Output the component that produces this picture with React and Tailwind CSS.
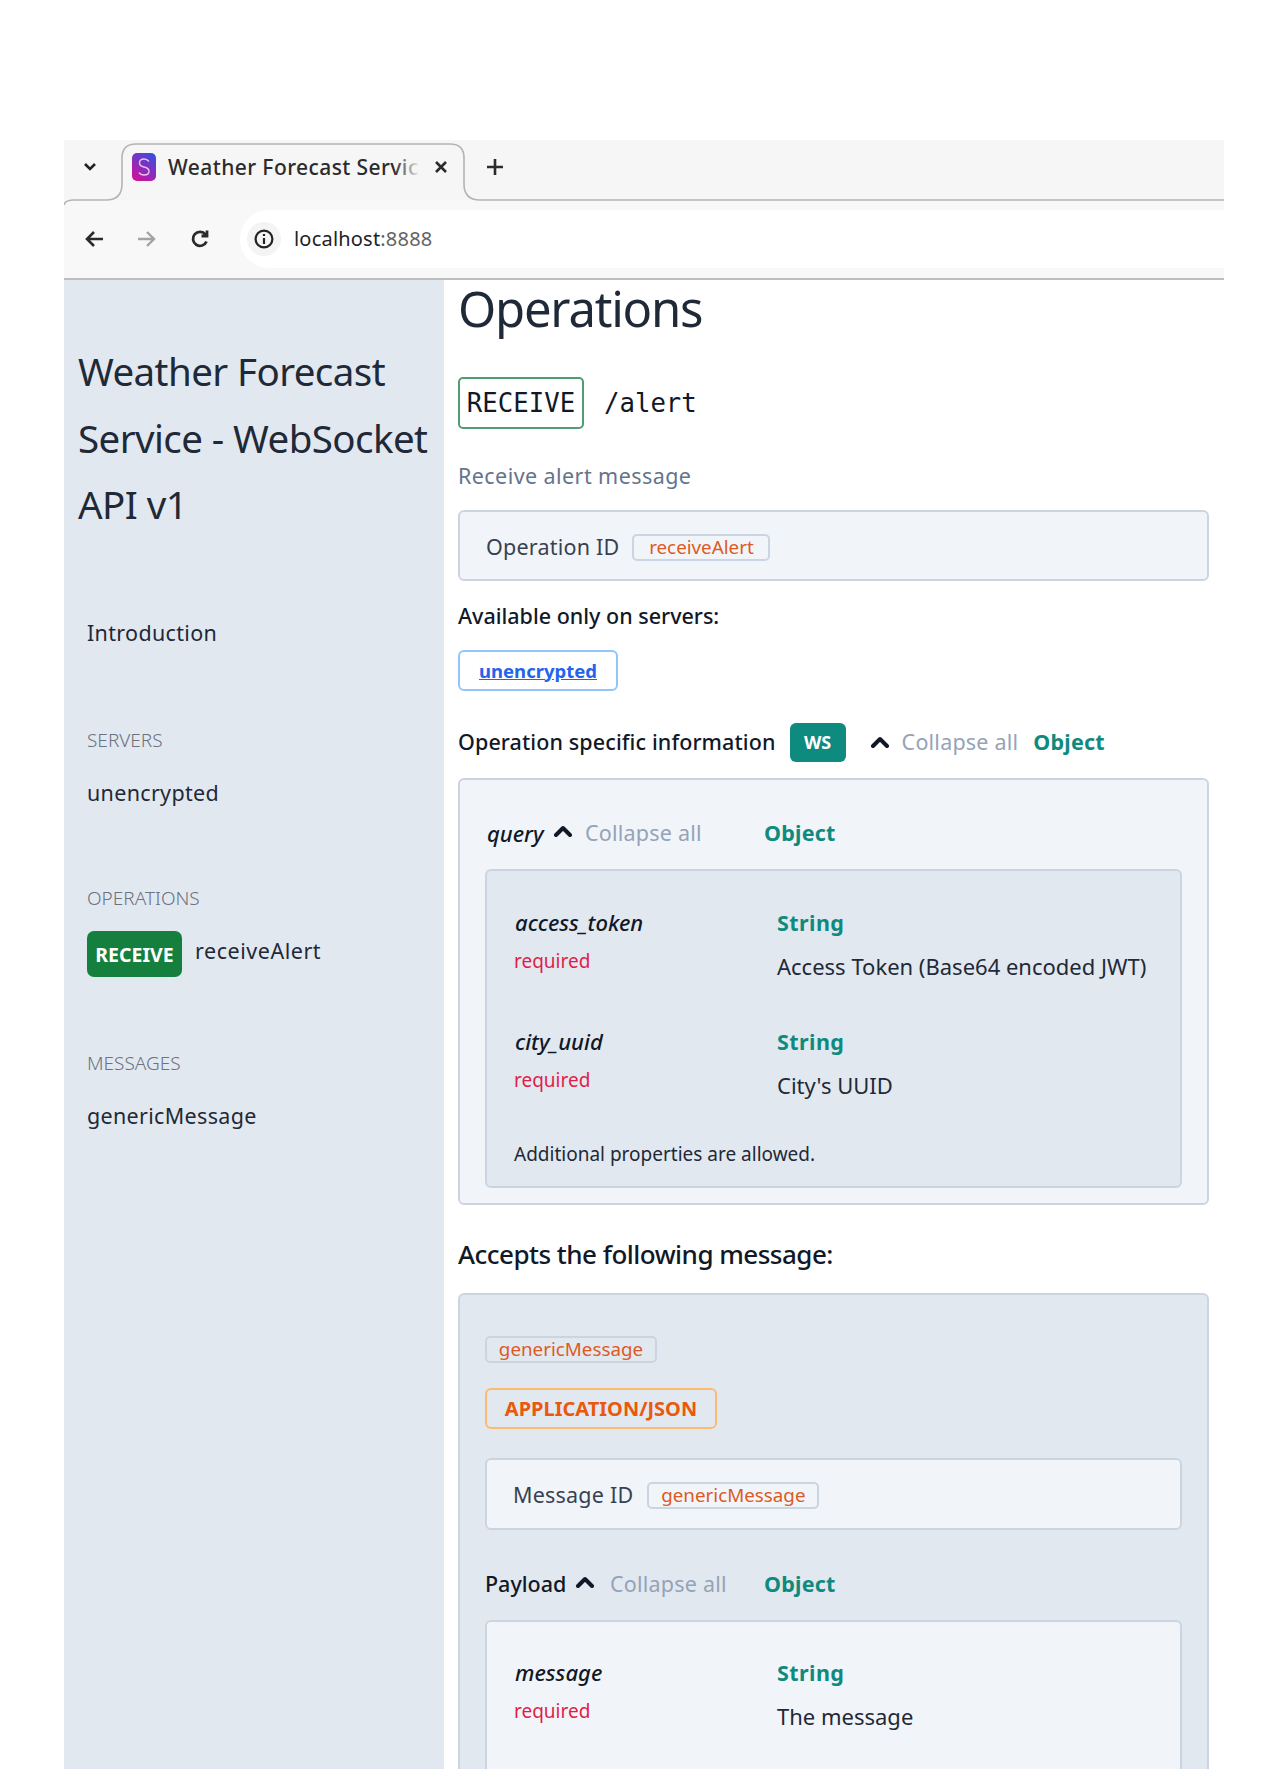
import React from "react";

const Chevron = ({ className = "" }) => (
  <svg width="20" height="12" viewBox="0 0 20 12" className={className} fill="none" stroke="#111827" strokeWidth="4" strokeLinecap="round" strokeLinejoin="round">
    <path d="M3 10 L10 3 L17 10" />
  </svg>
);

const Tag = ({ children, className = "" }) => (
  <span className={`inline-flex items-center justify-center h-[27px] rounded-[5px] border-2 border-[#cbd5e1] text-[#dd5a23] text-[18.8px] ${className}`}>{children}</span>
);

const Field = ({ name, type = "String", desc, className = "" }) => (
  <div className={`flex ${className}`}>
    <div className="w-[263px]">
      <div className="h-[34px] leading-[32px] pl-[1px] italic font-medium text-[22px] text-[#111827]">{name}</div>
      <div className="mt-[4px] h-[34px] leading-[34px] text-[19px] text-[#e11d48]">required</div>
    </div>
    <div>
      <div className="h-[34px] leading-[34px] font-bold text-[21.5px] tracking-[0.02em] text-[#0f8a7e]">{type}</div>
      <div className="mt-[9px] h-[34px] leading-[34px] text-[22px] text-[#1f2937]">{desc}</div>
    </div>
  </div>
);

export default function App() {
  return (
    <div className="h-[1769px] overflow-hidden bg-white pl-[64px] pr-[38px] pt-[140px] font-['Noto_Sans',sans-serif]">
      {/* tab strip */}
      <div className="relative flex h-[60px] items-center bg-[#f6f6f6] pb-[6px]">
        <svg className="absolute left-0 top-0" width="1160" height="66" viewBox="0 0 1160 66" fill="none" stroke="#b4b4b4" strokeWidth="1.6">
          <path d="M0 65 Q1 60 10 60 H42 Q58 60 58 44 V18 Q58 4 72 4 H386 Q400 4 400 18 V44 Q400 60 416 60 H1160" />
        </svg>
        <svg className="relative ml-[19px]" width="14" height="10" viewBox="0 0 14 10" fill="none" stroke="#222" strokeWidth="2.6"><path d="M2 2 L7 7 L12 2" /></svg>
        <svg className="relative ml-[35px]" width="24" height="28" viewBox="0 0 24 28">
          <defs>
            <linearGradient id="fav" x1="0.8" y1="0" x2="0.2" y2="1">
              <stop offset="0" stopColor="#3b4de0" />
              <stop offset="1" stopColor="#d0109a" />
            </linearGradient>
          </defs>
          <rect width="24" height="28" rx="5" fill="url(#fav)" />
          <path d="M17 8.5 Q15 6 12 6 Q7.5 6 7.5 10 Q7.5 13 12 14 Q17 15 17 18.5 Q17 22 12 22 Q8.5 22 7 19.5" fill="none" stroke="#e9c4ee" strokeWidth="1.4" />
        </svg>
        <div className="relative ml-[12px] w-[252px] overflow-hidden whitespace-nowrap text-[21px] leading-[30px] font-medium tracking-[0.02em] text-[#2b2b2b]">
          Weather Forecast Servic
          <div className="absolute right-0 top-0 h-full w-[26px] bg-gradient-to-r from-[#f6f6f6]/0 to-[#f6f6f6]" />
        </div>
        <svg className="relative ml-[14px]" width="14" height="14" viewBox="0 0 14 14" stroke="#2b2b2b" strokeWidth="2.6"><path d="M2 2 L12 12 M12 2 L2 12" /></svg>
        <svg className="relative ml-[39px]" width="16" height="16" viewBox="0 0 16 16" stroke="#2b2b2b" strokeWidth="2.6"><path d="M8 0 V16 M0 8 H16" /></svg>
      </div>
      {/* toolbar */}
      <div className="flex h-[78px] items-center bg-[#f8f8f8]">
        <svg className="ml-[20px]" width="20" height="18" viewBox="0 0 20 18" fill="none" stroke="#2b2b2b" strokeWidth="2.6"><path d="M19 9 H3 M10 2 L3 9 L10 16" /></svg>
        <svg className="ml-[33px]" width="20" height="18" viewBox="0 0 20 18" fill="none" stroke="#a3a3a3" strokeWidth="2.4"><path d="M1 9 H17 M10 2 L17 9 L10 16" /></svg>
        <svg className="ml-[33px]" width="20" height="20" viewBox="0 0 20 20" fill="none" stroke="#2b2b2b" strokeWidth="2.8"><path d="M16.5 12.5 A7 7 0 1 1 15.5 5.5 M17 1.5 V7 H11.5" /></svg>
        <div className="ml-[30px] flex h-[58px] flex-1 items-center rounded-l-[29px] bg-white pl-[7px]">
          <div className="flex h-[34px] w-[34px] items-center justify-center rounded-full bg-[#f4f4f4]">
            <svg width="20" height="20" viewBox="0 0 20 20" fill="none" stroke="#222" strokeWidth="2.2"><circle cx="10" cy="10" r="8.4" /><path d="M10 9 V15 M10 5 V7" /></svg>
          </div>
          <span className="ml-[13px] text-[20px] leading-[30px] tracking-[0.01em] text-[#222]">localhost<span className="text-[#5f6368]">:8888</span></span>
        </div>
      </div>
      <div className="h-[2px] bg-[#bdbdbd]" />
      {/* page */}
      <div className="flex h-[1489px]">
        <aside className="w-[380px] shrink-0 bg-[#e2e8f0] pl-[14px] text-[#1f2937]">
          <h1 className="mt-[58px] text-[38.5px] leading-[66.5px] tracking-[-0.015em] text-[#1f2937]">Weather Forecast Service - WebSocket API v1</h1>
          <div className="ml-[9px] mt-[75px] h-[40px] text-[21.5px] leading-[40px] tracking-[0.015em]">Introduction</div>
          <div className="ml-[9px] mt-[73px] h-[28px] text-[19px] leading-[28px] font-light text-[#6b7280]">SERVERS</div>
          <div className="ml-[9px] mt-[19px] h-[40px] text-[21.5px] leading-[40px] tracking-[0.015em]">unencrypted</div>
          <div className="ml-[9px] mt-[71px] h-[28px] text-[19px] leading-[28px] font-light text-[#6b7280]">OPERATIONS</div>
          <div className="ml-[9px] mt-[19px] flex h-[46px] items-start">
            <span className="flex h-[46px] w-[95px] items-center justify-center rounded-[7px] bg-[#15803d] pt-[3px] text-[19.5px] font-bold text-white">RECEIVE</span>
            <span className="ml-[13px] h-[40px] text-[21.5px] leading-[40px] tracking-[0.025em]">receiveAlert</span>
          </div>
          <div className="ml-[9px] mt-[72px] h-[28px] text-[19px] leading-[28px] font-light text-[#6b7280]">MESSAGES</div>
          <div className="ml-[9px] mt-[19px] h-[40px] text-[21.5px] leading-[40px] tracking-[0.015em]">genericMessage</div>
        </aside>
        <main className="min-w-0 flex-1 pl-[14px] pr-[15px] text-[#1f2937]">
          <h2 className="mt-[-3px] h-[62px] text-[49px] leading-[62px] tracking-[-0.025em]">Operations</h2>
          <div className="mt-[38px] flex h-[52px] items-center">
            <span className="flex h-[52px] w-[126px] items-center justify-center rounded-[5px] border-2 border-[#4f9d73] font-['DejaVu_Sans_Mono',monospace] text-[25.7px] text-[#111827]">RECEIVE</span>
            <span className="ml-[20px] font-['DejaVu_Sans_Mono',monospace] text-[25.7px] text-[#111827]">/alert</span>
          </div>
          <p className="mt-[27px] h-[40px] text-[21.5px] leading-[40px] tracking-[0.02em] text-[#64748b]">Receive alert message</p>
          <div className="mt-[14px] flex h-[71px] items-center rounded-[6px] border-2 border-[#cbd5e1] bg-[#f1f5f9] pl-[26px] pt-[4px]">
            <span className="text-[21.5px] tracking-[0.01em] text-[#374151]">Operation ID</span>
            <Tag className="ml-[13px] w-[138px]">receiveAlert</Tag>
          </div>
          <p className="mt-[15px] h-[40px] text-[21.5px] leading-[40px] font-medium text-[#111827]">Available only on servers:</p>
          <div className="mt-[14px] flex h-[41px] w-[160px] items-center justify-center rounded-[6px] border-2 border-[#93c5fd] text-[18.5px] font-bold text-[#2563eb] underline">unencrypted</div>
          <div className="mt-[31px] flex h-[40px] items-center">
            <span className="text-[21.5px] font-medium tracking-[0.005em] text-[#111827]">Operation specific information</span>
            <span className="ml-[14px] flex h-[39px] w-[56px] items-center justify-center rounded-[6px] bg-[#0f8a7e] text-[18px] font-bold text-white">WS</span>
            <Chevron className="ml-[24px]" />
            <span className="ml-[12px] text-[21.5px] tracking-[0.01em] text-[#94a3b8]">Collapse all</span>
            <span className="ml-[15px] text-[21.5px] font-bold tracking-[0.01em] text-[#0f8a7e]">Object</span>
          </div>
          {/* query */}
          <div className="mt-[16px] h-[427px] rounded-[6px] border-2 border-[#cbd5e1] bg-[#f1f5f9] px-[25px] pt-[33px]">
            <div className="flex h-[40px] items-center">
              <span className="w-[68px] pl-[2px] text-[22px] font-medium italic text-[#111827]">query</span>
              <Chevron className="mt-[-4px]" />
              <span className="ml-[12px] w-[179px] text-[21.5px] tracking-[0.01em] text-[#94a3b8]">Collapse all</span>
              <span className="text-[21.5px] font-bold tracking-[0.01em] text-[#0f8a7e]">Object</span>
            </div>
            <div className="mt-[16px] h-[319px] rounded-[6px] border-2 border-[#cbd5e1] bg-[#e2e8f0] pl-[27px] pt-[35px]">
              <Field name="access_token" desc="Access Token (Base64 encoded JWT)" />
              <Field name="city_uuid" desc="City's UUID" className="mt-[42px]" />
              <p className="mt-[39px] text-[19px] leading-[26px] text-[#1f2937]">Additional properties are allowed.</p>
            </div>
          </div>
          <h3 className="mt-[30px] h-[38px] text-[26px] leading-[38px] font-medium tracking-[-0.02em] text-[#111827]">Accepts the following message:</h3>
          {/* message */}
          <div className="mt-[20px] h-[600px] rounded-[6px] border-2 border-[#cbd5e1] bg-[#e2e8f0] px-[25px] pt-[41px]">
            <Tag className="w-[172px]">genericMessage</Tag>
            <div className="mt-[25px] flex h-[41px] w-[232px] items-center justify-center rounded-[6px] border-2 border-[#fdba74] text-[20px] font-bold text-[#ea580c]">APPLICATION/JSON</div>
            <div className="mt-[29px] flex h-[72px] items-center rounded-[6px] border-2 border-[#cbd5e1] bg-[#f1f5f9] pl-[26px] pt-[3px]">
              <span className="text-[21.5px] tracking-[0.01em] text-[#374151]">Message ID</span>
              <Tag className="ml-[14px] w-[172px]">genericMessage</Tag>
            </div>
            <div className="mt-[34px] flex h-[40px] items-center">
              <span className="w-[90px] text-[21.5px] font-medium text-[#111827]">Payload</span>
              <Chevron className="mt-[-4px]" />
              <span className="ml-[15px] w-[154px] text-[21.5px] tracking-[0.01em] text-[#94a3b8]">Collapse all</span>
              <span className="text-[21.5px] font-bold tracking-[0.01em] text-[#0f8a7e]">Object</span>
            </div>
            <div className="mt-[16px] h-[300px] rounded-[6px] border-2 border-[#cbd5e1] bg-[#f1f5f9] pl-[27px] pt-[34px]">
              <Field name="message" desc="The message" />
            </div>
          </div>
        </main>
      </div>
    </div>
  );
}
